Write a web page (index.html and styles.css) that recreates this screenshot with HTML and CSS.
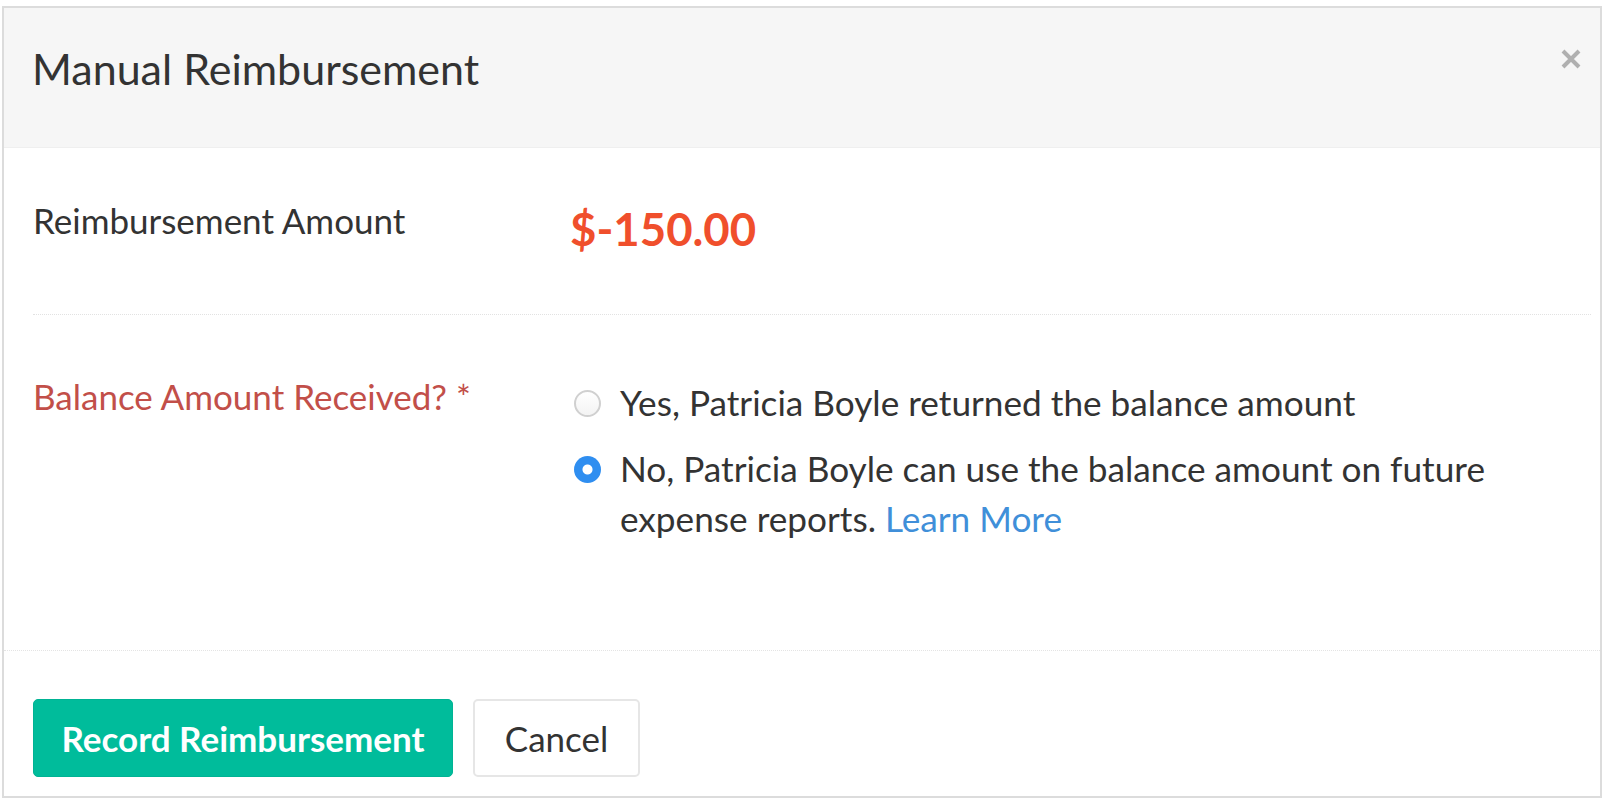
FILE: index.html
```html
<!DOCTYPE html>
<html lang="en">
<head>
<meta charset="utf-8">
<title>Manual Reimbursement</title>
<link rel="stylesheet" href="styles.css">
</head>
<body>
<div class="dialog">
  <div class="header">
    <h1 class="title">Manual Reimbursement</h1>
    <button class="close" aria-label="Close">
      <svg width="22" height="22" viewBox="0 0 22 22"><path d="M3 3 L19 19 M19 3 L3 19" stroke="#b0b0b0" stroke-width="4" stroke-linecap="butt"/></svg>
    </button>
  </div>
  <div class="body">
    <div class="row row-amount">
      <div class="label">Reimbursement Amount</div>
      <div class="amount">$-150.00</div>
    </div>
    <div class="row row-balance">
      <div class="label label-required">Balance Amount Received? *</div>
      <div class="options">
        <div class="option">
          <span class="radio"></span>
          <span class="option-text">Yes, Patricia Boyle returned the balance amount</span>
        </div>
        <div class="option">
          <span class="radio radio-checked"></span>
          <p class="option-text">No, Patricia Boyle can use the balance amount on future expense reports. <a class="link" href="#">Learn More</a></p>
        </div>
      </div>
    </div>
  </div>
  <div class="footer">
    <button class="btn btn-primary">Record Reimbursement</button>
    <button class="btn btn-default">Cancel</button>
  </div>
</div>
</body>
</html>
```

FILE: styles.css
```css
* { box-sizing: border-box; }
html, body { margin: 0; padding: 0; background: #ffffff; }
body { font-family: "Lato", "Noto Sans", sans-serif; color: #333333; }

.dialog {
  margin: 6px 0 0 2px;
  width: 1600px;
  height: 792px;
  border: 2px solid #dcdcdc;
  display: flex;
  flex-direction: column;
  background: #ffffff;
}

.header {
  height: 140px;
  flex: none;
  background: #f6f6f6;
  border-bottom: 1px solid #efefef;
  display: flex;
  justify-content: space-between;
  align-items: flex-start;
  padding: 0 18px 0 28px;
}
.title {
  margin: 36px 0 0 0;
  font-size: 43px;
  font-weight: 400;
  line-height: 50px;
  color: #333333;
}
.close {
  margin-top: 40px;
  padding: 0;
  border: 0;
  background: transparent;
  width: 22px;
  height: 22px;
  cursor: pointer;
}
.close svg { display: block; }

.body { flex: none; }
.row {
  display: grid;
  grid-template-columns: 537px 1fr;
  align-items: start;
}
.row-amount {
  margin: 0 9px 0 29px;
  padding: 52px 0 72px 0;
  border-bottom: 1px dotted #e2e2e2;
  height: 167px;
}
.row-balance {
  padding: 62px 0 0 29px;
  height: 335px;
}
.label {
  font-size: 35px;
  line-height: 40px;
  color: #333333;
}
.label-required { color: #c24f49; margin-top: -1px; }
.amount {
  font-size: 45.5px;
  font-weight: 700;
  line-height: 50px;
  color: #f04f2c;
  margin-top: 4px;
}

.options { display: flex; flex-direction: column; gap: 16px; }
.option { display: flex; align-items: flex-start; gap: 19px; margin-left: 4px; }
.option-text {
  margin: 0;
  font-size: 35.2px;
  line-height: 50px;
  color: #333333;
  max-width: 880px;
}
.radio {
  flex: none;
  width: 27px;
  height: 27px;
  border-radius: 50%;
  border: 2px solid #d0d0d0;
  background: linear-gradient(#ffffff, #f3f3f3);
  margin-top: 13px;
}
.radio-checked {
  border: 0;
  background: radial-gradient(circle, #ffffff 0 4.5px, #2f8ef0 5.5px);
}
.link { color: #408fd9; text-decoration: none; }

.footer {
  flex: 1;
  border-top: 1px dotted #e4e4e4;
  padding: 48px 0 0 29px;
  display: flex;
  gap: 20px;
  align-items: flex-start;
}
.btn {
  height: 78px;
  border-radius: 5px;
  font-family: "Lato", "Noto Sans", sans-serif;
  cursor: pointer;
}
.btn-primary {
  width: 420px;
  background: #00bc9b;
  border: 1px solid #00b394;
  color: #ffffff;
  font-size: 35px;
  font-weight: 700;
}
.btn-default {
  width: 167px;
  background: #ffffff;
  border: 2px solid #e6e6e6;
  color: #333333;
  font-size: 35px;
  font-weight: 400;
}
```
